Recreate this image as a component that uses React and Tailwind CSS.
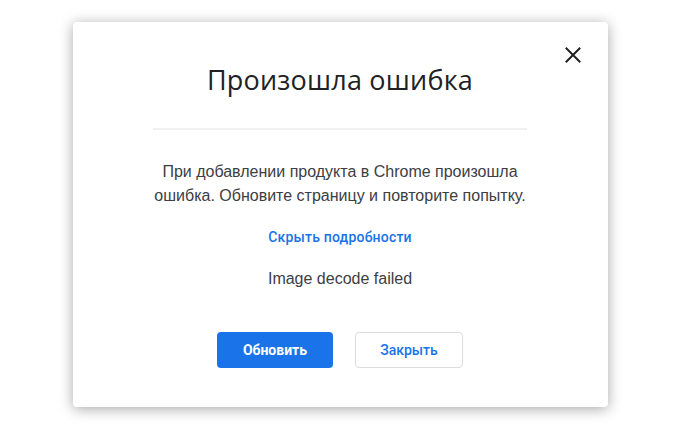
export default function App() {
  return (
    <div className="w-[680px] h-[430px] bg-white pt-[22px] overflow-hidden" style={{ fontFamily: 'Roboto, "Liberation Sans", Arial, sans-serif' }}>
      <div className="relative mx-auto w-[535px] h-[385px] bg-white rounded-[4px] shadow-[0_2px_14px_rgba(0,0,0,0.35)] flex flex-col items-center">
        <button className="absolute right-[26px] top-[24px] w-[18px] h-[18px] text-[#202124]" aria-label="Закрыть">
          <svg viewBox="0 0 18 18" width="18" height="18" fill="none" stroke="currentColor" strokeWidth="2" strokeLinecap="square">
            <path d="M2.5 2.5 L15.5 15.5 M15.5 2.5 L2.5 15.5" />
          </svg>
        </button>
        <h1 className="mt-[40px] text-[27px] leading-[36px] text-[#202124] tracking-[0.2px]" style={{ fontFamily: '"Open Sans", Roboto, sans-serif' }}>
          Произошла ошибка
        </h1>
        <div className="mt-[30px] w-[374px] h-[2px] bg-[#f1f1f1]" />
        <p className="mt-[30px] w-[400px] text-center text-[16px] leading-[24px] text-[#3c4043]" style={{ fontFamily: '"Liberation Sans", Arial, sans-serif' }}>
          При добавлении продукта в Chrome произошла ошибка. Обновите страницу и повторите попытку.
        </p>
        <a className="mt-[20px] text-[14px] leading-[18px] font-medium text-[#1a73e8] tracking-[0.2px]">Скрыть подробности</a>
        <p className="mt-[21px] text-[16px] leading-[24px] text-[#3c4043]" style={{ fontFamily: '"Liberation Sans", Arial, sans-serif' }}>Image decode failed</p>
        <div className="mt-[41px] flex gap-[22px]">
          <button className="w-[116px] h-[36px] rounded-[4px] bg-[#1a73e8] text-white text-[14px] font-bold">Обновить</button>
          <button className="w-[108px] h-[36px] rounded-[4px] border border-[#dadce0] bg-white text-[#1a73e8] text-[14px] font-medium">Закрыть</button>
        </div>
      </div>
    </div>
  );
}
